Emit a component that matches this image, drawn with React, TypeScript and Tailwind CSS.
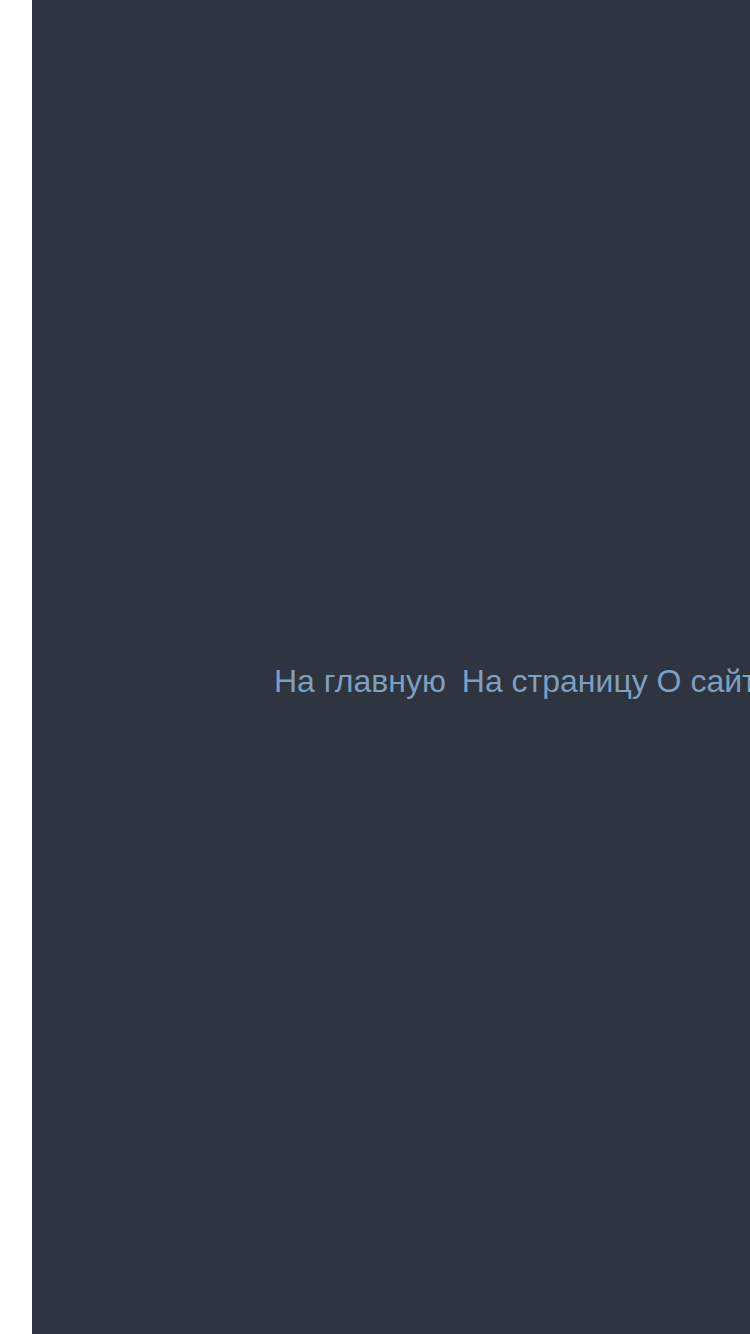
export default function App() {
  return (
    <div className="flex w-[750px] h-[1334px] overflow-hidden bg-white font-['Liberation_Sans',Arial,sans-serif]">
      <div className="w-[32px] shrink-0 bg-white" />
      <div className="flex-1 min-w-0 bg-[#2e3440] overflow-hidden">
        <nav className="pt-[663px] pl-[242px] whitespace-nowrap text-[32px] leading-[37px] text-[#7f9fbf]">
          <a href="#" className="text-[#7f9fbf]">На главную</a>{" "}
          <a href="#" className="ml-[7px] text-[#7f9fbf]">На страницу О сайте</a>
        </nav>
      </div>
    </div>
  );
}
